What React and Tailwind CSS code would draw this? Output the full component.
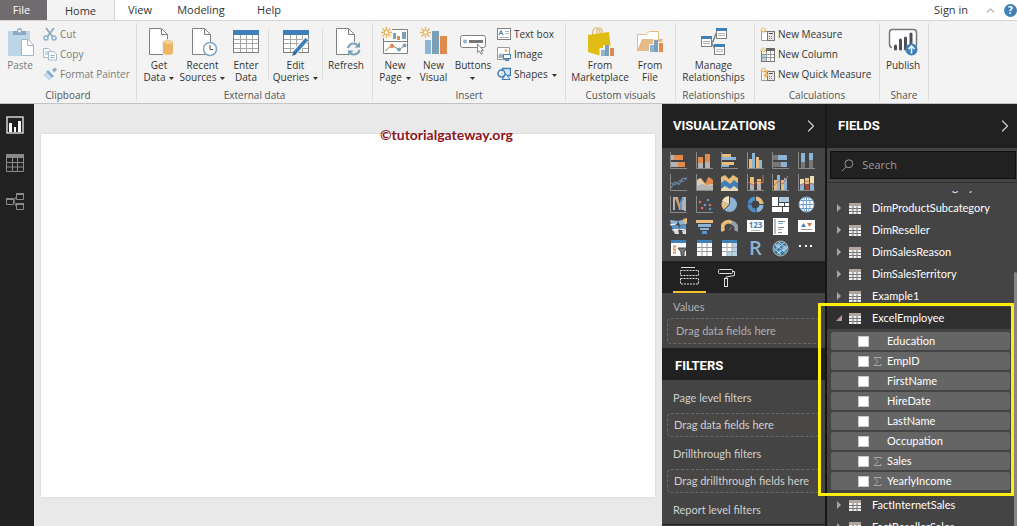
import { ChevronRight, ChevronUp } from 'lucide-react';

const BLUE = '#3f80b8';
const SKY = '#8cb4d6';
const ORANGE = '#e08b4c';
const TAN = '#e8bd7c';
const GRAY = '#b4b4b4';
const LINE = '#808080';

function Svg({ w, h, children, className }) {
  return (
    <svg width={w} height={h} viewBox={`0 0 ${w} ${h}`} fill="none" className={className} aria-hidden="true">
      {children}
    </svg>
  );
}

function Rects({ items }) {
  return items.map(([x, y, w, h, fill], i) => <rect key={i} x={x} y={y} width={w} height={h} fill={fill} />);
}

function Caret() {
  return (
    <Svg w={5} h={3} className="ml-1 inline-block align-middle">
      <path d="M0 0H5L2.5 3Z" fill="#333" />
    </Svg>
  );
}

/* ---------- ribbon icons ---------- */

function Sheet({ x = 1 }) {
  return (
    <g transform={`translate(${x} 0)`}>
      <path d="M.5 1.5H12.500L18.500 7.500V27.500H.5Z" fill="#fff" stroke={LINE} />
      <path d="M12.500 1.500V7.500H18.500" stroke={LINE} />
    </g>
  );
}

function PasteIcon() {
  return (
    <Svg w={28} h={30}>
      <rect x="2" y="4" width="22" height="25" fill="#bcd6e8" />
      <path d="M7 8V4H11C11 0 16 0 16 4H20V8Z" fill="#8aa9c6" />
      <circle cx="13.500" cy="4" r="1.500" fill="#f3f3f3" />
      <path d="M15.500 12.500H22L27.500 18V28.500H15.500Z" fill="#fff" stroke="#9db8cf" />
      <path d="M21.500 12.500V18.500H27.500" stroke="#9db8cf" />
    </Svg>
  );
}

function CutIcon() {
  return (
    <Svg w={14} h={14}>
      <path d="M3 1L9.500 9.500M11 1L4.500 9.500" stroke="#93a8bb" strokeWidth="1.800" />
      <circle cx="3" cy="11" r="2" stroke="#86b2d4" strokeWidth="1.500" />
      <circle cx="11" cy="11" r="2" stroke="#86b2d4" strokeWidth="1.500" />
    </Svg>
  );
}

function CopyIcon() {
  return (
    <Svg w={14} h={14}>
      <path d="M.5 1.500H5.500L7.500 3.500V10.500H.5Z" fill="#fff" stroke="#a6b9c9" />
      <path d="M2 5H5M2 7H5" stroke="#86b2d4" />
      <path d="M5.500 4.500H10.500L13.500 7V13H5.500Z" fill="#fff" stroke="#a6b9c9" />
      <path d="M7.500 8.500H11.500M7.500 10.500H11.500" stroke="#86b2d4" />
    </Svg>
  );
}

function PainterIcon() {
  return (
    <Svg w={14} h={14}>
      <path d="M9 3L12 0.500L14 2.500L11.500 5.500Z" fill="#9aacbc" />
      <path d="M5 3L11 9L9 11L3 5Z" fill="#86add0" />
      <path d="M3 5.500L8.500 11L6 13.500L0 8Z" fill="#c4dceb" />
    </Svg>
  );
}

function GetDataIcon() {
  return (
    <Svg w={30} h={30}>
      <Sheet x={5} />
      <path d="M18.500 15C18.500 12 29.500 12 29.500 15V26C29.500 29 18.500 29 18.500 26Z" fill="#ebb564" stroke="#f3f3f3" />
      <ellipse cx="24" cy="15" rx="4.500" ry="1.800" fill="#f5d49d" />
    </Svg>
  );
}

function RecentIcon() {
  return (
    <Svg w={30} h={30}>
      <Sheet x={4} />
      <circle cx="22" cy="22" r="6.500" fill="#fff" stroke="#7ea6c6" strokeWidth="1.500" />
      <path d="M22 18V22.500H25" stroke="#555" />
    </Svg>
  );
}

function TableIcon({ pen }) {
  return (
    <Svg w={28} h={30}>
      <rect x="1.500" y="3.500" width="25" height="22" fill="#fff" stroke={LINE} />
      <rect x="1" y="3" width="26" height="5" fill={BLUE} />
      <path d="M2 12.500H26M2 16.500H26M2 21.500H26M8.500 8V25M14.500 8V25M20.500 8V25" stroke="#a8a8a8" />
      {pen && (
        <>
          <path d="M24.500 12.500L13 25" stroke="#f3f3f3" strokeWidth="6" />
          <path d="M25 12L12.500 26" stroke={BLUE} strokeWidth="3.500" />
          <path d="M12 24.500L14.500 27L10 29Z" fill="#235b91" />
          <path d="M23.500 10L27 13.500" stroke="#fff" />
        </>
      )}
    </Svg>
  );
}

function RefreshIcon() {
  return (
    <Svg w={30} h={30}>
      <Sheet x={5} />
      <circle cx="22.500" cy="22" r="7" fill="#f3f3f3" />
      <path d="M17 21C18 16 24 15 27.500 19M28.500 23C27.500 28 21 29 18 25" stroke="#789fb5" strokeWidth="2" />
      <path d="M29 15V20.500H23.500ZM17 29V23.500H22.500Z" fill="#789fb5" />
    </Svg>
  );
}

function Spark({ s = 1 }) {
  return (
    <g transform={`scale(${s})`}>
      <path d="M5.500 0V11M0 5.500H11M1.500 1.500L9.500 9.500M9.500 1.500L1.500 9.500" stroke="#e8b45c" strokeWidth="1.300" />
      <circle cx="5.500" cy="5.500" r="2" fill="#fff" stroke="#e8b45c" />
    </g>
  );
}

function NewPageIcon() {
  return (
    <Svg w={28} h={30}>
      <path d="M2.500 2.500H26.500V26.500H2.500Z" fill="#fff" stroke={LINE} />
      <path d="M2.500 14.500H26.500" stroke={LINE} />
      <Rects items={[[12, 6, 3, 6, '#7b9fb5'], [16, 9, 3, 4, ORANGE], [21, 5, 4, 7, '#7b9fb5']]} />
      <path d="M4 24L11 18L18 23L24 18" stroke={LINE} />
      <circle cx="11" cy="19" r="2.200" fill={ORANGE} />
      <circle cx="18" cy="22.500" r="2" fill="#7b9fb5" />
      <circle cx="23.500" cy="18.500" r="2" fill="#7b9fb5" />
      <rect width="11" height="11" fill="#f3f3f3" />
      <Spark />
    </Svg>
  );
}

function NewVisualIcon() {
  return (
    <Svg w={28} h={30}>
      <Rects items={[[5, 13, 6, 14, SKY], [12, 4, 7, 23, '#7b9fb5'], [20, 9, 7, 18, ORANGE]]} />
      <Spark />
    </Svg>
  );
}

function ButtonsIcon() {
  return (
    <Svg w={28} h={30}>
      <rect x="1.500" y="8.500" width="25" height="12" rx="2" fill="#fff" stroke={LINE} />
      <circle cx="6" cy="14.500" r="2" fill={SKY} />
      <path d="M10 14.500H24" stroke="#777" strokeWidth="3" />
      <path d="M18.500 17V25.500L20.500 24L22 27L23.500 26.500L22 23.500H24.500Z" fill="#fff" stroke="#888" />
    </Svg>
  );
}

function TextBoxIcon() {
  return (
    <Svg w={14} h={14}>
      <rect x=".5" y="1.500" width="13" height="11" fill="#fff" stroke={LINE} />
      <path d="M2 8L4 3.500L6 8M3 6.500H5" stroke={BLUE} />
      <path d="M8 4.500H12M8 6.500H12M2 10.500H12" stroke={GRAY} />
    </Svg>
  );
}

function ImageIcon() {
  return (
    <Svg w={14} h={14}>
      <path d="M.5 .5H12.500V12.500H.5Z" fill="#fff" stroke="#999" />
      <circle cx="9" cy="3.500" r="1.500" fill={TAN} />
      <path d="M1.500 11V8L4 6L7 9V11Z" fill="#9fb2c2" />
      <rect x="6.500" y="7.500" width="7" height="4" fill="#fff" stroke={BLUE} />
      <path d="M10 12V13.500M8 13.500H12" stroke={BLUE} />
    </Svg>
  );
}

function ShapesIcon() {
  return (
    <Svg w={14} h={14}>
      <rect x="5.500" y="1.500" width="8" height="7" fill="#d8e8f4" stroke={BLUE} strokeWidth="1.500" />
      <circle cx="4.500" cy="6.500" r="3.500" fill="#f3f3f3" fillOpacity=".8" stroke={BLUE} strokeWidth="1.500" />
      <path d="M5 12.500L9 7L13 12.500Z" fill="#e6f0f8" stroke={BLUE} />
    </Svg>
  );
}

function MarketIcon() {
  return (
    <Svg w={28} h={30}>
      <path d="M7 9C5 -1 14 -2 14 7M11 7C10 -1 17 0 16 6" stroke={TAN} strokeWidth="1.500" />
      <path d="M2 8L23 5L25 24L15 29L2 25Z" fill="#dfbd14" />
      <path d="M13.500 29V21H17V18H24V20H28V30Z" fill="#f3f3f3" />
      <Rects items={[[15, 23, 4, 6, SKY], [19, 18, 4, 11, '#7b9fb5'], [24, 21, 4, 8, ORANGE]]} />
    </Svg>
  );
}

function FromFileIcon() {
  return (
    <Svg w={28} h={30}>
      <path d="M1.500 24V7.500H10L13 4.500H22.500V12" fill="#fff" stroke={TAN} />
      <path d="M1 24L6 12H27L23 24Z" fill="#e5bb88" />
      <path d="M13 25V17H17V12H22V15H27V25Z" fill="#f3f3f3" />
      <Rects items={[[14, 18, 4, 7, SKY], [18, 13, 4, 12, '#7b9fb5'], [23, 16, 4, 9, ORANGE]]} />
    </Svg>
  );
}

function MiniCard({ x, y }) {
  return (
    <g transform={`translate(${x} ${y})`}>
      <rect x=".5" y=".5" width="10" height="10" fill="#fff" stroke={LINE} />
      <rect width="11" height="3" fill={BLUE} />
      <path d="M2 5.500H9M2 7.500H9" stroke={GRAY} />
    </g>
  );
}

function ManageIcon() {
  return (
    <Svg w={28} h={30}>
      <path d="M11 14.500H13L16 6.500H18M11 14.500L15 22.500" stroke={LINE} strokeWidth="1.500" />
      <MiniCard x={1} y={9} />
      <MiniCard x={16} y={1} />
      <MiniCard x={14} y={17} />
    </Svg>
  );
}

function CalcIcon({ kind }) {
  return (
    <Svg w={15} h={15}>
      <path d="M1.500 4.500H7.500V13.500H1.500Z" fill="#fff" stroke="#999" />
      {kind === 'column' ? (
        <>
          <rect x="1.500" y="3.500" width="13" height="11" fill="#fff" stroke="#777" />
          <rect x="6" y="1" width="9" height="3" fill="#666" />
          <rect x="2" y="7" width="4" height="7" fill="#b4d3e9" />
          <path d="M2 7.500H14M2 10.500H14M6.500 4V14M10.500 4V14" stroke="#999" />
        </>
      ) : (
        <>
          <rect x="7.500" y="4.500" width="7" height="9" fill="#e8e8e8" stroke="#777" />
          <path d="M9 6.500H13" stroke="#555" />
          <path d="M9 9.500H13M9 11.500H13" stroke="#777" strokeDasharray="1 1" />
        </>
      )}
      {kind === 'quick' && <path d="M7 3L3 9H5L3 14L9 7H6L9 3Z" fill="#edb85c" />}
      <Spark s={0.6} />
    </Svg>
  );
}

function PublishIcon() {
  return (
    <Svg w={30} h={30}>
      <rect x="1.500" y="2.500" width="27" height="18" rx="3" fill="#fff" stroke="#777" strokeWidth="1.500" />
      <rect x="4" y="19" width="24" height="3" fill="#f3f3f3" />
      <path d="M7.500 19V22M12.500 13V22M17.500 11V22M23 7V18" stroke="#4c4f55" strokeWidth="3" strokeLinecap="round" />
      <circle cx="23.500" cy="22.500" r="6" fill={BLUE} />
      <path d="M23.500 26.500V19.500M20.500 22L23.500 19L26.500 22" stroke="#fff" strokeWidth="1.500" />
    </Svg>
  );
}

/* ---------- ribbon ---------- */

function BigButton({ icon, lines, caret, className, muted }) {
  return (
    <button type="button" className={`flex shrink-0 flex-col items-center gap-[2px] pt-1 ${muted ? 'text-[#7b7b7b]' : 'text-[#333]'} ${className}`}>
      <span className="flex h-[30px] items-center">{icon}</span>
      <span className="text-center whitespace-nowrap">
        {lines.map((line, i) => (
          <span key={line} className="block">
            {line}
            {caret === 'inline' && i === lines.length - 1 && <Caret />}
          </span>
        ))}
        {caret === 'below' && (
          <span className="-ml-1 block">
            <Caret />
          </span>
        )}
      </span>
    </button>
  );
}

function SmallButton({ icon, label, caret, muted }) {
  return (
    <button type="button" className={`flex h-5 items-center gap-[3px] whitespace-nowrap ${muted ? 'text-[#7b7b7b]' : 'text-[#333]'}`}>
      {icon}
      <span>
        {label}
        {caret && <Caret />}
      </span>
    </button>
  );
}

function Group({ label, className, children }) {
  return (
    <section aria-label={label} className={`flex shrink-0 flex-col justify-between border-r border-[#dcdcdc] ${className}`}>
      <div className="flex items-start">{children}</div>
      <div className="text-center text-[#555]">{label}</div>
    </section>
  );
}

function Ribbon() {
  return (
    <div className="flex h-[84px] shrink-0 overflow-hidden border-t border-b border-t-[#d4d4d4] border-b-[#c4c4c4] bg-[#f3f3f3] py-[2px] text-[10px]">
      <Group label="Clipboard" className="w-[137px]">
        <BigButton muted className="w-[40px]" icon={<PasteIcon />} lines={['Paste']} />
        <div className="pt-px pl-[3px]">
          <SmallButton muted icon={<CutIcon />} label="Cut" />
          <SmallButton muted icon={<CopyIcon />} label="Copy" />
          <SmallButton muted icon={<PainterIcon />} label="Format Painter" />
        </div>
      </Group>
      <Group label="External data" className="w-[236px]">
        <BigButton className="w-[44px]" icon={<GetDataIcon />} lines={['Get', 'Data']} caret="inline" />
        <BigButton className="w-[43px]" icon={<RecentIcon />} lines={['Recent', 'Sources']} caret="inline" />
        <BigButton className="w-[44px]" icon={<TableIcon />} lines={['Enter', 'Data']} />
        <div className="mt-[6px] h-[50px] border-r border-[#dcdcdc]" />
        <BigButton className="w-[53px]" icon={<TableIcon pen />} lines={['Edit', 'Queries']} caret="inline" />
        <div className="mt-[6px] h-[50px] border-r border-[#dcdcdc]" />
        <BigButton className="w-[46px]" icon={<RefreshIcon />} lines={['Refresh']} />
      </Group>
      <Group label="Insert" className="w-[193px]">
        <BigButton className="w-[42px] pl-[2px]" icon={<NewPageIcon />} lines={['New', 'Page']} caret="inline" />
        <BigButton className="w-[37px]" icon={<NewVisualIcon />} lines={['New', 'Visual']} />
        <BigButton className="w-[42px]" icon={<ButtonsIcon />} lines={['Buttons']} caret="below" />
        <div className="pt-px pl-[3px]">
          <SmallButton icon={<TextBoxIcon />} label="Text box" />
          <SmallButton icon={<ImageIcon />} label="Image" />
          <SmallButton icon={<ShapesIcon />} label="Shapes" caret />
        </div>
      </Group>
      <Group label="Custom visuals" className="w-[110px]">
        <BigButton className="w-[66px] pl-[2px]" icon={<MarketIcon />} lines={['From', 'Marketplace']} />
        <BigButton className="w-[36px]" icon={<FromFileIcon />} lines={['From', 'File']} />
      </Group>
      <Group label="Relationships" className="w-[79px] pr-[3px]">
        <BigButton className="w-full" icon={<ManageIcon />} lines={['Manage', 'Relationships']} />
      </Group>
      <Group label="Calculations" className="w-[125px]">
        <div className="pt-px pl-[5px]">
          <SmallButton icon={<CalcIcon kind="measure" />} label="New Measure" />
          <SmallButton icon={<CalcIcon kind="column" />} label="New Column" />
          <SmallButton icon={<CalcIcon kind="quick" />} label="New Quick Measure" />
        </div>
      </Group>
      <Group label="Share" className="w-[49px]">
        <BigButton className="w-[46px]" icon={<PublishIcon />} lines={['Publish']} />
      </Group>
    </div>
  );
}

function TabBar() {
  return (
    <nav className="flex h-5 shrink-0 items-stretch bg-white text-[#333]">
      <button type="button" className="w-[47px] bg-[#6f6b6e] pr-1 text-white">File</button>
      <button type="button" className="-mb-px w-[68px] border-r border-[#d4d4d4] bg-[#f3f3f3]">Home</button>
      <button type="button" className="w-[50px]">View</button>
      <button type="button" className="w-[72px]">Modeling</button>
      <button type="button" className="w-[64px]">Help</button>
      <div className="ml-auto flex items-center">
        <button type="button">Sign in</button>
        <button type="button" aria-label="Collapse ribbon" className="ml-[16px]">
          <ChevronUp size={13} color="#aaa" />
        </button>
        <button type="button" aria-label="Help" className="ml-[7px] flex size-[13px] items-center justify-center rounded-full bg-[#3f80b8] text-[10px] font-bold text-white">?</button>
      </div>
    </nav>
  );
}

/* ---------- visualization gallery ---------- */

const axis = <path d="M.5 0V16.500H17" stroke="#8a8a8a" />;

const visuals = [
  ['Stacked bar chart', <>{axis}<Rects items={[[1, 3, 3, 5, GRAY], [4, 3, 9, 5, ORANGE], [1, 10, 7, 5, GRAY], [8, 10, 7, 5, ORANGE]]} /></>],
  ['Stacked column chart', <>{axis}<Rects items={[[2, 5, 5, 6, ORANGE], [2, 11, 5, 5, GRAY], [9, 2, 5, 8, ORANGE], [9, 10, 5, 6, GRAY]]} /></>],
  ['Clustered bar chart', <>{axis}<Rects items={[[1, 2, 9, 3, TAN], [1, 5, 14, 3, SKY], [1, 10, 12, 3, TAN], [1, 13, 7, 2, SKY]]} /></>],
  ['Clustered column chart', <>{axis}<Rects items={[[2, 7, 3, 9, TAN], [5, 1, 3, 15, SKY], [9, 5, 3, 11, TAN], [12, 8, 3, 8, SKY]]} /></>],
  ['100% stacked bar chart', <>{axis}<Rects items={[[1, 3, 5, 5, '#777'], [6, 3, 9, 5, SKY], [1, 10, 8, 5, '#777'], [9, 10, 6, 5, SKY]]} /></>],
  ['100% stacked column chart', <>{axis}<Rects items={[[3, 1, 4, 9, SKY], [3, 10, 4, 6, '#777'], [11, 1, 4, 7, SKY], [11, 8, 4, 8, '#777']]} /></>],
  ['Line chart', <>{axis}<path d="M1 14L4 9C6 6 8 13 10 9L12 5C14 3 15 5 17 5" stroke="#6484b8" strokeWidth="1.300" /><path d="M1 9L5 11L10 6L13 8L17 3" stroke="#7d8790" /></>],
  ['Area chart', <>{axis}<path d="M1 16V7L5 4L9 9C11 8 11 3 13 3L17 6V16Z" fill={ORANGE} /><path d="M1 16V6L4 4L10 11L17 10V16Z" fill="#dcd0ac" /><path d="M1 16V12L6 10L12 12L17 11V16Z" fill={GRAY} /></>],
  ['Stacked area chart', <><path d="M0 15V3L4 1L8 5L12 1L17 4V15Z" fill={TAN} /><path d="M0 16V9L4 6L9 10L13 6L17 9V16Z" fill={BLUE} /><path d="M0 17V15L4 12L9 15L13 12L17 15V17Z" fill="#e7d7b5" /></>],
  ['Line and stacked column chart', <>{axis}<Rects items={[[3, 3, 4, 7, TAN], [3, 10, 4, 6, GRAY], [10, 5, 4, 5, TAN], [10, 10, 4, 6, GRAY]]} /><path d="M1 8L6 11L11 7L16 9V1" stroke="#c67350" /></>],
  ['Line and clustered column chart', <>{axis}<Rects items={[[2, 6, 3, 10, TAN], [5, 1, 3, 15, SKY], [9, 6, 3, 10, TAN], [12, 4, 3, 12, SKY]]} /><path d="M1 13L6 7L11 10L16 2" stroke="#c67350" /></>],
  ['Ribbon chart', <>{axis}<Rects items={[[2, 5, 4, 5, '#eee0b0'], [2, 10, 4, 6, SKY], [7, 4, 4, 6, TAN], [7, 10, 4, 6, '#a04838'], [12, 2, 4, 7, '#eee0b0'], [12, 9, 4, 7, SKY]]} /><path d="M2 12L9 7L16 11" stroke="#c67350" /></>],
  ['Waterfall chart', <>{axis}<path d="M4 14V2H7L10 13H13V2H15V15" stroke={GRAY} strokeWidth="2" /><path d="M6 2L10 12" stroke="#e09a5e" strokeWidth="2" /><path d="M11 14V6L13 2" stroke="#6794bd" strokeWidth="2" /></>],
  ['Scatter chart', <>{axis}<g fill="#5b95c6"><circle cx="12" cy="4" r="1.300" /><circle cx="9" cy="9" r="1.300" /><circle cx="14" cy="13" r="1.300" /></g><g fill="#d47357"><circle cx="4" cy="6" r="1.300" /><circle cx="6" cy="12" r="1.300" /><circle cx="14" cy="9" r="1.300" /></g></>],
  ['Pie chart', <><circle cx="8.500" cy="8.500" r="7.500" fill={SKY} /><path d="M8 8V0A8 8 0 0 0 1 5Z" fill="#f1dfb8" /><path d="M8 9L1 5.500A8 8 0 0 0 3 14Z" fill="#e7bd83" /><path d="M8.500 1V8.500L3 14" stroke="#444" /></>],
  ['Donut chart', <><circle cx="8.500" cy="8.500" r="6" stroke="#4d8fca" strokeWidth="4" /><path d="M8.500 2.500A6 6 0 0 1 14.500 8.500" stroke={TAN} strokeWidth="4" /><path d="M14.500 9A6 6 0 0 1 10 14.300" stroke={SKY} strokeWidth="4" /><path d="M8.500 0V5M12 8.500H17M0 8H5M9 12V17" stroke="#444" /></>],
  ['Treemap', <Rects items={[[0, 1, 6, 9, '#fff'], [7, 1, 10, 5, '#acc9df'], [7, 7, 5, 3, '#fff'], [13, 7, 4, 3, '#fff'], [0, 11, 10, 5, '#fff'], [11, 11, 6, 5, '#fff']]} />],
  ['Map', <><circle cx="8.500" cy="8.500" r="7.500" fill="#fff" stroke={SKY} /><ellipse cx="8.500" cy="8.500" rx="3.500" ry="7.500" stroke="#6ea0cb" /><path d="M1 8.500H16M2.500 4.500H14.500M2.500 12.500H14.500M8.500 1V16" stroke="#6ea0cb" /></>],
  ['Filled map', <><path d="M0 2L8 3L7 6L1 7ZM8 3L16 1L17 6L10 7Z" fill={SKY} /><path d="M1 7H8L9 10L3 12ZM9 8L16 6V11L12 13Z" fill="#5795c8" /><path d="M3 12L8 11L9 16H5ZM12 13L16 12V16H13Z" fill="#dedede" /><path d="M13 1L17 0V5L15 6Z" fill={TAN} /><path d="M0 7L6 6M2 12L9 11L16 12" stroke="#fff" /></>],
  ['Funnel', <Rects items={[[0, 2, 17, 3, TAN], [2, 6, 13, 3, SKY], [4, 10, 9, 2, SKY], [6, 13, 5, 3, '#5795c8']]} />],
  ['Gauge', <><path d="M2.500 13A6 6 0 0 1 11 4.800" stroke={TAN} strokeWidth="4" /><path d="M11 4.800A6 6 0 0 1 15 13" stroke="#95a2ab" strokeWidth="4" /><path d="M8 12L11 9" stroke="#888" /></>],
  ['Card', <><rect y="2" width="17" height="12" fill="#fff" /><text x="8.500" y="10" textAnchor="middle" fontSize="8" fontWeight="700" fill={BLUE}>123</text><path d="M4 12.500H13" stroke={GRAY} /></>],
  ['Multi-row card', <><rect x="1" width="15" height="17" fill="#fff" /><path d="M3 1V16" stroke="#777" /><path d="M6 3.500H13M6 9.500H12M6 14.500H10" stroke="#888" /><path d="M6 5.500H11M6 11.500H10" stroke={SKY} /></>],
  ['KPI', <><rect y="2" width="17" height="12" fill="#fff" /><path d="M3 9L5.500 5L8 9Z" fill={BLUE} /><path d="M9 5H14L11.500 9Z" fill="#d4774b" /><path d="M3 11.500H14" stroke="#999" /></>],
  ['Slicer', <><rect x="1" width="15" height="16" fill="#fff" /><rect x="1" width="15" height="3" fill={BLUE} /><path d="M3 6.500H6M3 9.500H6M3 12.500H6" stroke={ORANGE} strokeWidth="2" /><path d="M8 8H17L14 12V17L11 15V12Z" fill="#777" stroke="#444" /></>],
  ['Table', <><rect x="1" width="15" height="16" fill="#fff" /><rect x="1" width="15" height="3" fill={BLUE} /><path d="M1 7.500H16M1 11.500H16M6 3V16M11 3V16" stroke="#9a9a9a" /></>],
  ['Matrix', <><rect x="1" width="15" height="16" fill="#fff" /><rect x="1" width="15" height="3" fill={BLUE} /><path d="M11 3H16V16H6V12H11Z" fill="#b5d4ea" /><path d="M1 7.500H16M1 11.500H16M6 3V16M11 3V16" stroke="#aaa" /></>],
  ['R script visual', <text x="8.500" y="15" textAnchor="middle" fontSize="20" fontWeight="600" fill={SKY}>R</text>],
  ['ArcGIS map', <><circle cx="8.500" cy="8.500" r="7.500" fill="#3c78a6" stroke="#b9b9a6" /><path d="M3 5L7 3L9 6L5 9ZM10 7L15 5L14 11L11 12ZM5 11L9 10L8 15Z" fill={SKY} /><path d="M2 11L13 2M5 14L16 7M3 4L14 13M2 8L9 15M7 2L15 9" stroke="#c4dae8" strokeWidth=".8" /></>],
  ['More visuals', <Rects items={[[1, 5, 2, 2, '#fff'], [7, 5, 2, 2, '#fff'], [12, 5, 2, 2, '#fff']]} />],
];

function DropZone({ children, className }) {
  return (
    <div className={`mx-[5px] flex items-center rounded-sm border border-dashed border-[#6a6a6a] bg-[#494745] whitespace-nowrap ${className}`}>
      {children}
    </div>
  );
}

function PanelHeader({ title, className }) {
  return (
    <div className={`flex h-[44px] items-center justify-between bg-[#212121] ${className}`}>
      <h2 className="font-['Roboto'] text-[13px] leading-4 font-bold text-white">{title}</h2>
      <button type="button" aria-label={`Collapse ${title}`}>
        <ChevronRight size={20} color="#c8c8c8" strokeWidth={1.5} />
      </button>
    </div>
  );
}

function Visualizations() {
  return (
    <aside className="w-[165px] shrink-0 overflow-hidden border-r-2 border-[#161616] bg-[#444] text-[#d0d0d0]">
      <PanelHeader title="VISUALIZATIONS" className="pr-1 pl-[11px]" />
      <div className="grid grid-cols-[repeat(6,17px)] justify-between gap-y-[5px] pt-1 pr-[10px] pb-[4px] pl-[8px]">
        {visuals.map(([name, drawing]) => (
          <button key={name} type="button" aria-label={name} title={name}>
            <Svg w={17} h={17}>{drawing}</Svg>
          </button>
        ))}
      </div>
      <div className="flex h-8 gap-2 bg-[#212121] pl-[11px]">
        <button type="button" aria-label="Fields" className="flex w-[33px] items-center justify-center border-b-2 border-[#f2c02e]">
          <Svg w={19} h={18}>
            <path d="M1 .5H15" stroke="#ddd" />
            <path d="M.5 3.500H18.500V8.500H.5ZM.5 11.500H18.500V17H.5Z" stroke="#ddd" strokeDasharray="2 1" />
          </Svg>
        </button>
        <button type="button" aria-label="Format" className="flex w-6 items-center justify-center">
          <Svg w={17} h={19}>
            <rect x=".5" y="1.500" width="14" height="4" rx="1" stroke="#ddd" />
            <path d="M14.500 3.500H16.500V7.500L8 9V11" stroke="#ddd" />
            <rect x="6.500" y="10.500" width="3" height="8" stroke="#ddd" />
          </Svg>
        </button>
      </div>
      <div className="font-['Lato'] text-[11px]">
        <h3 className="flex h-[25px] items-center pt-[2px] pl-[11px] text-[#b0b0b0]">Values</h3>
        <DropZone className="mb-1 h-[26px] pl-[8px] text-[#b0b0b0]">Drag data fields here</DropZone>
        <h2 className="flex h-8 items-center bg-[#212121] pt-1 pl-[13px] font-['Roboto'] text-[13px] font-bold text-white">FILTERS</h2>
        <h3 className="flex h-[33px] items-center pt-[2px] pl-[11px]">Page level filters</h3>
        <DropZone className="h-6 pl-[6px]">Drag data fields here</DropZone>
        <h3 className="flex h-8 items-center pt-[2px] pl-[11px]">Drillthrough filters</h3>
        <DropZone className="h-6 pl-[6px]">Drag drillthrough fields here</DropZone>
        <h3 className="flex h-8 items-center border-b border-[#222] pt-[2px] pl-[11px]">Report level filters</h3>
      </div>
    </aside>
  );
}

/* ---------- fields ---------- */

const columns = [
  { name: 'Education' },
  { name: 'EmpID', sum: true },
  { name: 'FirstName' },
  { name: 'HireDate' },
  { name: 'LastName' },
  { name: 'Occupation' },
  { name: 'Sales', sum: true },
  { name: 'YearlyIncome', sum: true },
];

function TableRow({ name, open }) {
  return (
    <button type="button" className={`flex h-[22px] w-full items-center pl-[9px] text-left text-white ${open ? 'bg-[#303030]' : ''}`}>
      <Svg w={6} h={8}>
        {open ? <path d="M6 1V7H0Z" fill="#b89a94" /> : <path d="M1 0L5 4L1 8Z" fill="#a5a5a5" />}
      </Svg>
      <Svg w={12} h={11} className="mr-[11px] ml-[7px]">
        <rect width="12" height="11" fill="#eee" />
        <rect width="12" height="3" fill="#b3a59c" />
        <path d="M0 5.500H12M0 8.500H12M4 3V11M8 3V11" stroke="#777" />
      </Svg>
      {name}
    </button>
  );
}

function Fields() {
  return (
    <aside className="relative flex w-[190px] shrink-0 flex-col bg-[#444]">
      <PanelHeader title="FIELDS" className="pr-[2px] pl-[11px]" />
      <label className="mt-[3px] mr-px ml-[3px] flex h-7 shrink-0 items-center gap-[8px] border border-[#111] bg-[#212121] pl-[10px]">
        <Svg w={15} h={15}>
          <circle cx="9" cy="5.500" r="4.500" stroke="#a5a5a5" />
          <path d="M6 9L1 14" stroke="#a5a5a5" />
        </Svg>
        <input type="text" aria-label="Search" placeholder="Search" className="w-full min-w-0 bg-transparent text-[11px] text-white outline-none placeholder:text-[#9c9c9c]" />
      </label>
      <div className="mt-[3px] min-h-0 flex-1 overflow-hidden border-t border-[#333] font-['Lato'] text-[11px]">
        <div className="mt-2 flex h-[6px] flex-col justify-end overflow-hidden">
          <div className="flex h-[20px] shrink-0 items-center pl-[45px] text-white">DimProductCategory</div>
        </div>
        <TableRow name="DimProductSubcategory" />
        <TableRow name="DimReseller" />
        <TableRow name="DimSalesReason" />
        <TableRow name="DimSalesTerritory" />
        <TableRow name="Example1" />
        <TableRow name="ExcelEmployee" open />
        <ul className="flex flex-col gap-[2px] pt-[3px] pr-[7px] pb-1 pl-[4px]">
          {columns.map(({ name, sum }) => (
            <li key={name}>
              <label className="flex h-[18px] items-center rounded-xs bg-[#656565] pl-[27px] text-white">
                <input type="checkbox" className="size-[11px] appearance-none border border-[#d0c8c4] bg-white" />
                <span className="ml-1 w-[14px]">
                  {sum && (
                    <Svg w={9} h={9}>
                      <path d="M8 2V.5H1L5 4.500L1 8.500H8V7" stroke="#a8a8a8" />
                    </Svg>
                  )}
                </span>
                {name}
              </label>
            </li>
          ))}
        </ul>
        <TableRow name="FactInternetSales" />
        <TableRow name="FactResellerSales" />
      </div>
      <div className="absolute right-0 bottom-0 h-[254px] w-[3px] rounded-t bg-[#858585]" />
      <div className="pointer-events-none absolute top-[199px] right-[3px] h-[193px] w-[196px] border-[3px] border-[#fdee0c]" />
    </aside>
  );
}

function ViewRail() {
  return (
    <nav className="flex w-[34px] shrink-0 flex-col items-center gap-5 bg-[#212121] pt-3 pr-1">
      <button type="button" aria-label="Report view">
        <Svg w={18} h={18}>
          <rect x="1" y="1" width="16" height="16" stroke="#d8d0cc" strokeWidth="1.500" />
          <Rects items={[[3, 7, 3, 9, '#fff'], [8, 11, 2, 5, '#fff'], [12, 5, 3, 11, '#fff']]} />
        </Svg>
      </button>
      <button type="button" aria-label="Data view">
        <Svg w={18} h={18}>
          <path d="M.5 .5H17.500V17.500H.5ZM1 8.500H17M1 13H17M6.500 4V17M11.500 4V17" stroke="#8a8a8a" />
          <rect width="18" height="4" fill="#8a8a8a" />
        </Svg>
      </button>
      <button type="button" aria-label="Relationships view">
        <Svg w={18} h={18}>
          <path d="M.5 6.500H7.500V12.500H.5ZM10.500 1.500H17.500V7.500H10.500ZM10.500 11.500H17.500V17.500H10.500ZM8 9L10 5M8 9L10 14" stroke="#8a8a8a" />
          <Rects items={[[0, 6, 8, 2, '#8a8a8a'], [10, 1, 8, 2, '#8a8a8a'], [10, 11, 8, 2, '#8a8a8a']]} />
        </Svg>
      </button>
    </nav>
  );
}

export default function App() {
  return (
    <div className="flex h-screen flex-col overflow-hidden bg-white font-['Open_Sans','Noto_Sans',sans-serif] text-[11px] leading-3">
      <TabBar />
      <Ribbon />
      <div className="flex min-h-0 flex-1">
        <ViewRail />
        <main className="relative flex min-w-0 flex-1 bg-[#e9e9e9] px-[7px] pt-[30px] pb-[29px]">
          <div className="flex-1 bg-white shadow-[0_0_2px_#ccc]" />
          <p className="absolute top-[23px] left-[346px] font-['Lato'] text-[14px] leading-4 font-bold text-[#8c1420]">©tutorialgateway.org</p>
        </main>
        <Visualizations />
        <Fields />
      </div>
    </div>
  );
}
